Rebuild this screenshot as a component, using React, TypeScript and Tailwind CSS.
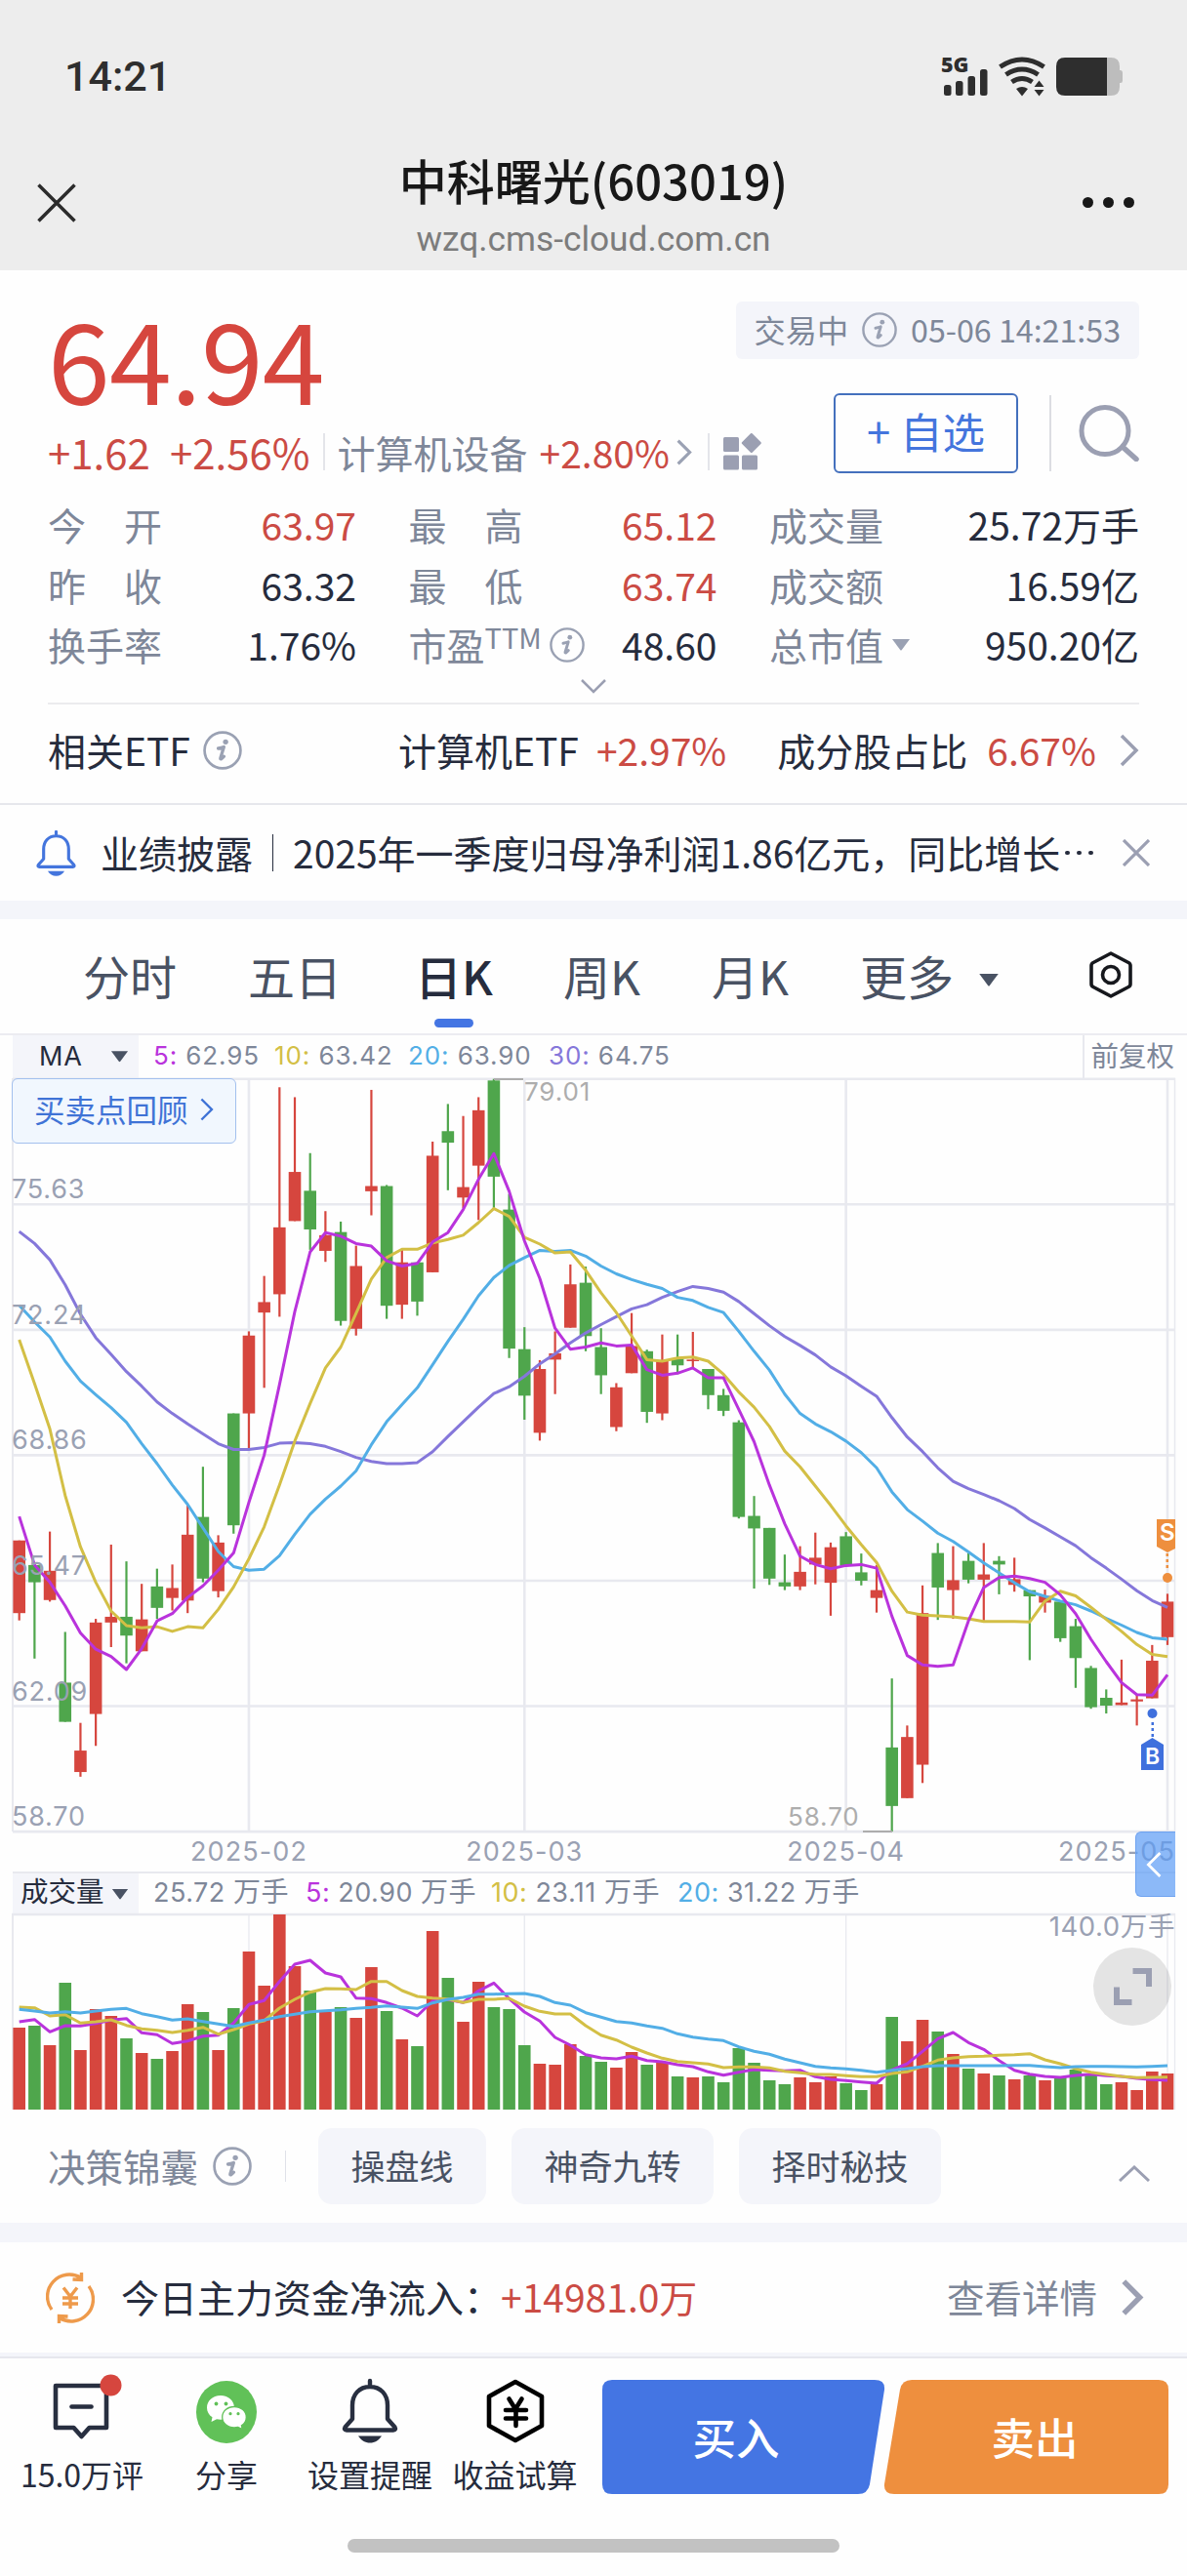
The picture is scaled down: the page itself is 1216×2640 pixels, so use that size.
import clsx from "clsx";

const UP = "#d6463e";
const DOWN = "#4fa64c";
const GRID = "#e8e9ef";

const MA_COLORS = {
  ma5: "#b933dc",
  ma10: "#d3bf45",
  ma20: "#52aee6",
  ma30: "#8577da",
};

// [rising, high, bodyTop, bodyBottom, low] in chart units below the top of the scale
const CANDLES: [number, number, number, number, number][] = [
  [1, 968, 968, 1107, 1121], [0, 1010, 1015, 1048, 1194], [1, 951, 1026, 1082, 1085],
  [0, 1143, 1240, 1315, 1315], [1, 1317, 1370, 1411, 1420], [1, 1118, 1125, 1300, 1361],
  [1, 976, 1114, 1125, 1172], [0, 1008, 1114, 1150, 1203], [1, 1051, 1119, 1180, 1180],
  [0, 1022, 1056, 1097, 1118], [1, 1014, 1059, 1078, 1102], [1, 900, 957, 1083, 1107],
  [0, 827, 923, 1041, 1048], [1, 958, 972, 1065, 1077], [0, 725, 725, 939, 955],
  [1, 568, 576, 725, 794], [1, 462, 512, 532, 676], [1, 101, 369, 497, 540],
  [1, 120, 263, 357, 357], [0, 227, 299, 373, 412], [1, 338, 384, 414, 435],
  [0, 358, 378, 548, 557], [1, 404, 443, 563, 576], [1, 106, 290, 300, 346],
  [0, 288, 290, 519, 544], [1, 412, 436, 517, 544], [0, 436, 436, 511, 538],
  [1, 205, 232, 455, 455], [0, 133, 185, 207, 298], [1, 156, 292, 312, 332],
  [1, 120, 145, 251, 355], [0, 85, 88, 272, 332], [0, 305, 335, 601, 619],
  [0, 560, 602, 691, 737], [1, 623, 640, 762, 777], [1, 568, 610, 622, 688],
  [1, 440, 478, 561, 561], [0, 444, 475, 577, 606], [0, 562, 598, 652, 688],
  [1, 667, 675, 751, 759], [1, 533, 596, 648, 648], [0, 603, 606, 722, 743],
  [1, 574, 623, 725, 738], [0, 574, 620, 633, 650], [1, 569, 622, 625, 640],
  [0, 640, 640, 690, 717], [0, 678, 690, 720, 730], [0, 738, 742, 923, 926],
  [0, 883, 921, 945, 1060], [0, 944, 944, 1041, 1053], [0, 995, 1048, 1056, 1063],
  [1, 979, 1028, 1056, 1063], [1, 953, 1001, 1014, 1052], [1, 972, 981, 1049, 1112],
  [0, 952, 960, 1016, 1016], [0, 993, 1029, 1045, 1054], [1, 1015, 1063, 1078, 1106],
  [0, 1232, 1364, 1476, 1525], [1, 1322, 1344, 1461, 1461], [1, 1054, 1107, 1397, 1432],
  [0, 973, 992, 1058, 1120], [1, 979, 1044, 1063, 1118], [0, 992, 1007, 1043, 1050],
  [1, 973, 1033, 1043, 1122], [0, 998, 1007, 1014, 1071], [1, 1001, 1042, 1053, 1066],
  [0, 1063, 1063, 1075, 1197], [1, 1062, 1074, 1087, 1106], [0, 1085, 1085, 1155, 1162],
  [0, 1118, 1132, 1193, 1250], [0, 1208, 1212, 1287, 1290], [0, 1253, 1269, 1284, 1299],
  [1, 1196, 1278, 1283, 1283], [1, 1262, 1272, 1276, 1322], [1, 1168, 1198, 1270, 1270],
  [1, 1070, 1085, 1153, 1168],
];

const PRICE_MA = {
  ma5: [922, 1015, 1048, 1093, 1145, 1176, 1190, 1215, 1175, 1122, 1108, 1077, 1055, 1025, 992, 895, 805, 670, 530, 416, 379, 386, 400, 405, 433, 443, 438, 397, 379, 335, 277, 228, 300, 395, 467, 562, 602, 598, 590, 596, 594, 641, 652, 648, 638, 657, 657, 717, 779, 862, 936, 998, 1014, 1022, 1016, 1014, 1021, 1113, 1188, 1206, 1209, 1206, 1122, 1058, 1039, 1036, 1041, 1048, 1072, 1108, 1157, 1200, 1240, 1263, 1264, 1225],
  ma10: [584, 668, 755, 882, 980, 1048, 1103, 1131, 1135, 1133, 1142, 1133, 1135, 1100, 1057, 1003, 942, 862, 778, 706, 638, 598, 534, 468, 427, 411, 411, 399, 392, 384, 360, 333, 348, 388, 401, 418, 416, 451, 494, 532, 577, 622, 625, 619, 617, 625, 650, 684, 713, 750, 797, 827, 864, 901, 940, 976, 1010, 1065, 1105, 1111, 1112, 1114, 1118, 1123, 1123, 1123, 1124, 1084, 1065, 1074, 1096, 1119, 1142, 1167, 1186, 1190],
  ma20: [518, 550, 579, 625, 663, 689, 714, 742, 783, 821, 862, 899, 944, 989, 1018, 1025, 1023, 997, 956, 918, 889, 864, 835, 785, 741, 708, 676, 632, 587, 545, 500, 465, 442, 427, 413, 415, 413, 424, 443, 458, 469, 478, 486, 503, 509, 522, 532, 568, 606, 642, 688, 725, 745, 760, 778, 800, 829, 875, 909, 931, 954, 970, 990, 1011, 1030, 1049, 1066, 1075, 1084, 1091, 1103, 1117, 1130, 1144, 1154, 1157],
  ma30: [377, 400, 431, 479, 535, 580, 612, 645, 673, 703, 725, 745, 764, 783, 794, 794, 790, 782, 781, 783, 788, 798, 809, 817, 821, 821, 819, 798, 769, 741, 713, 687, 674, 654, 630, 611, 590, 571, 555, 540, 525, 517, 503, 492, 482, 486, 493, 511, 534, 557, 578, 595, 613, 636, 653, 673, 692, 733, 770, 798, 829, 855, 869, 880, 892, 907, 928, 944, 961, 978, 1001, 1021, 1042, 1064, 1083, 1096],
};

const VOLUMES = [654, 648, 708, 516, 723, 597, 618, 687, 732, 750, 726, 582, 606, 723, 594, 420, 525, 306, 465, 540, 606, 591, 624, 468, 603, 690, 711, 357, 501, 636, 513, 591, 597, 708, 765, 768, 705, 741, 759, 777, 729, 768, 762, 804, 807, 804, 822, 717, 762, 816, 828, 807, 822, 804, 825, 846, 828, 621, 696, 630, 666, 735, 780, 795, 801, 813, 801, 816, 804, 783, 795, 828, 822, 846, 789, 795];

const VOLUME_MA = {
  ma5: [636, 629, 667, 648, 649, 641, 631, 626, 670, 676, 703, 695, 680, 677, 640, 583, 571, 512, 459, 447, 486, 498, 563, 565, 577, 594, 618, 572, 568, 577, 541, 517, 565, 606, 634, 684, 708, 737, 747, 750, 742, 755, 759, 768, 774, 790, 800, 791, 783, 785, 787, 785, 805, 813, 817, 821, 825, 784, 765, 727, 688, 669, 700, 721, 755, 785, 797, 804, 807, 801, 797, 802, 804, 810, 814, 816],
  ma10: [591, 593, 618, 614, 640, 636, 630, 647, 658, 662, 669, 662, 653, 674, 660, 643, 633, 594, 567, 545, 534, 535, 537, 512, 512, 540, 558, 563, 566, 577, 567, 567, 564, 588, 604, 612, 612, 648, 677, 692, 714, 732, 748, 758, 762, 766, 777, 775, 775, 778, 788, 793, 798, 798, 802, 805, 805, 795, 790, 773, 754, 747, 743, 742, 739, 737, 734, 753, 765, 780, 791, 798, 804, 808, 807, 806],
  ma20: [598, 603, 609, 605, 609, 603, 598, 595, 611, 620, 631, 627, 635, 643, 650, 640, 631, 620, 613, 605, 602, 599, 595, 592, 587, 591, 595, 578, 567, 561, 551, 551, 550, 549, 558, 577, 585, 608, 622, 635, 640, 649, 656, 673, 683, 689, 694, 713, 727, 736, 751, 762, 773, 778, 781, 785, 791, 785, 780, 774, 771, 771, 771, 771, 771, 770, 770, 774, 777, 774, 773, 773, 774, 775, 773, 771],
};

const MONTHS = [
  { label: "2025-02", index: 15 },
  { label: "2025-03", index: 33 },
  { label: "2025-04", index: 54 },
  { label: "2025-05", index: 75 },
];

const PRICE_TICKS = ["75.63", "72.24", "68.86", "65.47", "62.09", "58.70"];

const candleX = (i: number) => 19.7 + i * 15.684;
const priceY = (v: number) => (v - 85) / 1.8667 + 0.7;
const volumeY = (v: number) => (v - 303) / 3;

const toPoints = (values: number[], scale: (v: number) => number) =>
  values.map((v, i) => `${candleX(i).toFixed(1)},${scale(v).toFixed(1)}`).join(" ");

function InfoIcon({ className }: { className?: string }) {
  return (
    <svg viewBox="0 0 36 36" className={clsx("shrink-0", className)} fill="none">
      <circle cx="18" cy="18" r="16.6" stroke="#9aa1b3" strokeWidth="2.4" />
      <circle cx="20.8" cy="10.2" r="2.4" fill="#9aa1b3" />
      <path
        d="M14 16.2c2.2-.3 3.800-.8 5.200-1.300l-3.100 10.200c-.5 1.800 1.300.6 3.200-1.500"
        stroke="#9aa1b3"
        strokeWidth="3"
        strokeLinecap="round"
        strokeLinejoin="round"
      />
    </svg>
  );
}

function Chevron({ className, width = 4 }: { className?: string; width?: number }) {
  return (
    <svg viewBox="0 0 20 34" className={clsx("shrink-0", className)} fill="none">
      <path d="M2 2l15 15L2 32" stroke="currentColor" strokeWidth={width} />
    </svg>
  );
}

function Caret({ className }: { className?: string }) {
  return (
    <svg viewBox="0 0 20 12" className={clsx("shrink-0", className)} fill="currentColor">
      <path d="M1 0h18L10.800 11q-.8 1-1.600 0z" />
    </svg>
  );
}

function BellIcon({ className }: { className?: string }) {
  return (
    <svg viewBox="0 0 60 66" className={clsx("shrink-0", className)} fill="none">
      <path
        d="M30 2v6M12 41V27c0-11 7-19 18-19s18 8 18 19v14l7.500 8.500c1 1.800.5 3-1.500 3H6c-2 0-2.500-1.200-1.500-3z"
        stroke="currentColor"
        strokeWidth="4.400"
        strokeLinecap="round"
        strokeLinejoin="round"
      />
      <path d="M18 58.500h24c-3 4.500-7 7-12 7s-9-2.500-12-7z" fill="currentColor" />
    </svg>
  );
}

function StatusBar() {
  return (
    <div className="flex h-[156px] items-center justify-between pl-[66px] pr-[64px]">
      <span className="font-[Roboto] text-[43px] font-medium leading-none text-[#2e2e2e]">14:21</span>
      <svg width="188" height="42" viewBox="0 0 188 42" className="block overflow-visible" fill="#2e2e2e">
        <text x="0" y="16.500" fontSize="21.500" fontWeight="800" fontFamily="'Open Sans', sans-serif">
          5G
        </text>
        <rect x="3" y="30" width="7.500" height="11" rx="2.500" />
        <rect x="15" y="26" width="7.500" height="15" rx="2.500" />
        <rect x="27.500" y="21" width="7.500" height="20" rx="2.500" />
        <rect x="40" y="14" width="7.500" height="27" rx="2.500" />
        <g fill="none" stroke="#2e2e2e" strokeWidth="5">
          <path d="M60.500 11.500q22.500-15 45 0" />
          <path d="M66.500 19.500q16.500-11 33 0" />
          <path d="M72.500 27q10.500-7 21 0" />
        </g>
        <path d="M77 34q6-4 12 0l-6 7.500zM95.500 32l5-6.500 5 6.500zM95.500 35l5 6.500 5-6.500z" />
        <path d="M169 2h5q9 0 9 9v4h1q2 0 2 2.500v8q0 2.500-2 2.500h-1v4q0 9-9 9h-5z" fill="#bdbdbd" />
        <path d="M170 2v39h-43q-9 0-9-9V11q0-9 9-9z" />
      </svg>
    </div>
  );
}

function TitleBar() {
  return (
    <div className="relative flex h-[121px] flex-col items-center">
      <svg viewBox="0 0 40 40" className="absolute left-[38px] top-8 size-10">
        <path d="M1.500 1.500l37 37M38.500 1.500l-37 37" stroke="#2b2b2b" strokeWidth="3.500" />
      </svg>
      <h1 className="mt-0.5 text-[49px] font-medium leading-[52px] text-[#181818]">中科曙光(603019)</h1>
      <p className="mt-[15px] font-[Roboto] text-[35.300px] leading-[40px] text-[#7c7c7c]">wzq.cms-cloud.com.cn</p>
      <div className="absolute right-[54px] top-[46px] flex gap-2.5">
        <i className="size-[11px] rounded-full bg-[#181818]" />
        <i className="size-[11px] rounded-full bg-[#181818]" />
        <i className="size-[11px] rounded-full bg-[#181818]" />
      </div>
    </div>
  );
}

function QuoteHeader() {
  return (
    <div className="flex h-[227px] justify-between whitespace-nowrap">
      <div className="w-[690px] pt-[27px] text-[#cb4b44]">
        <div className="h-[126px] text-[115px] leading-[122px] tracking-[-0.9px] text-[#d6463e]">64.94</div>
        <div className="flex h-[66px] items-center">
          <span className="text-[42px]">+1.62</span>
          <span className="ml-5 text-[42px]">+2.56%</span>
          <i className="ml-[13px] h-[38px] w-0.5 shrink-0 bg-[#e4e5ea]" />
          <span className="ml-[13px] text-[39px] text-[#7e8799]">计算机设备</span>
          <span className="ml-3 text-[39px]">+2.80%</span>
          <Chevron className="ml-[7px] h-[27px] w-4 text-[#9aa1b3]" />
          <i className="ml-4 h-[38px] w-0.5 shrink-0 bg-[#e4e5ea]" />
          <svg viewBox="0 0 40 38" className="ml-3.5 h-[38px] w-10 shrink-0" fill="#9b9fb2">
            <rect x="0" y="4" width="16" height="15" rx="1.500" />
            <rect x="0" y="22.500" width="16" height="15" rx="1.500" />
            <rect x="19" y="22.500" width="16" height="15" rx="1.500" />
            <rect x="21.300" y="2.500" width="15" height="15" rx="1.500" transform="rotate(45 28.800 10)" />
          </svg>
        </div>
      </div>
      <div className="flex shrink-0 flex-col items-end pt-8">
        <div className="flex h-[59px] items-center rounded-md bg-[#f4f5fa] px-[19px] pb-0.5 text-[32.200px] text-[#7e8799]">
          交易中
          <InfoIcon className="mx-[14px] size-9" />
          <span>05-06 14:21:53</span>
        </div>
        <div className="mt-[35px] flex items-center">
          <button className="flex h-[82px] w-[189px] items-center justify-center rounded-md border-[2.500px] border-[#4470bd] pb-1 text-[43.500px] leading-none text-[#4475dd]">
            + 自选
          </button>
          <i className="ml-8 h-[78px] w-0.5 bg-[#dcdde2]" />
          <svg viewBox="0 0 62 58" className="ml-7 h-[58px] w-[62px]" fill="none" stroke="#9b9fb2">
            <circle cx="27" cy="26.500" r="24" strokeWidth="5" />
            <path d="M45 43l14 12.500" strokeWidth="5.500" strokeLinecap="round" />
          </svg>
        </div>
      </div>
    </div>
  );
}

function Stat({ label, value, tone = "text-[#262c3d]" }: { label: React.ReactNode; value: string; tone?: string }) {
  return (
    <div className="flex items-center justify-between whitespace-nowrap">
      <div className="flex items-center text-[#7e8799]">{label}</div>
      <span className={tone}>{value}</span>
    </div>
  );
}

function SpreadLabel({ text }: { text: string }) {
  return (
    <span className="flex w-[117px] justify-between">
      {text.split("").map((c) => (
        <span key={c}>{c}</span>
      ))}
    </span>
  );
}

function QuoteStats() {
  const red = "text-[#cb4b44]";
  return (
    <div className="grid auto-rows-[61.500px] grid-cols-[316px_316px_379px] justify-between text-[39px]">
      <Stat label={<SpreadLabel text="今开" />} value="63.97" tone={red} />
      <Stat label={<SpreadLabel text="最高" />} value="65.12" tone={red} />
      <Stat label="成交量" value="25.72万手" />
      <Stat label={<SpreadLabel text="昨收" />} value="63.32" />
      <Stat label={<SpreadLabel text="最低" />} value="63.74" tone={red} />
      <Stat label="成交额" value="16.59亿" />
      <Stat label="换手率" value="1.76%" />
      <Stat
        label={
          <>
            市盈
            <span className="mb-4 text-[29px] leading-none">TTM</span>
            <InfoIcon className="ml-2 size-9" />
          </>
        }
        value="48.60"
      />
      <Stat
        label={
          <>
            总市值
            <Caret className="ml-2 h-3.5 w-5 text-[#9aa1b3]" />
          </>
        }
        value="950.20亿"
      />
    </div>
  );
}

function RelatedEtf() {
  return (
    <div className="flex h-[103px] items-center whitespace-nowrap border-t-2 border-[#ebebee] pb-2 text-[39px] text-[#262c3d]">
      <span className="w-[145px]">相关ETF</span>
      <InfoIcon className="ml-3.5 size-10" />
      <span className="ml-40">计算机ETF</span>
      <span className="ml-[18px] text-[#cb4b44]">+2.97%</span>
      <span className="ml-[52px]">成分股占比</span>
      <span className="ml-5 text-[#cb4b44]">6.67%</span>
      <Chevron className="ml-auto h-[34px] w-5 text-[#9b9fb2]" width={3.5} />
    </div>
  );
}

function Notice() {
  return (
    <div className="flex h-[100px] items-center whitespace-nowrap border-t-2 border-[#e6e7ec] pl-9 pr-[38px] text-[39px] text-[#262c3d]">
      <BellIcon className="h-[47px] w-[43px] text-[#4475dd]" />
      <span className="ml-[24px] pb-0.5">业绩披露</span>
      <i className="mx-5 h-[38px] w-px bg-[#262c3d]" />
      <span className="pb-0.5">2025年一季度归母净利润1.86亿元，同比增长</span>
      <span className="ml-[5px] flex gap-[7.500px]">
        <i className="size-[4.500px] rounded-full bg-[#262c3d]" />
        <i className="size-[4.500px] rounded-full bg-[#262c3d]" />
        <i className="size-[4.500px] rounded-full bg-[#262c3d]" />
      </span>
      <svg viewBox="0 0 28 28" className="ml-auto size-7">
        <path d="M1 1l26 26M27 1L1 27" stroke="#9b9fb2" strokeWidth="3.200" />
      </svg>
    </div>
  );
}

function PeriodTabs() {
  const tabs = [
    { name: "分时", gap: "" },
    { name: "五日", gap: "ml-[73px]" },
    { name: "日K", gap: "ml-[75px]", active: true },
    { name: "周K", gap: "ml-[72px]" },
    { name: "月K", gap: "ml-[73px]" },
    { name: "更多", gap: "ml-[73px]" },
  ];
  return (
    <div className="flex h-[117px] items-center whitespace-nowrap pl-[85px] pr-[56px] text-[48px] text-[#495263]">
      {tabs.map((t) => (
        <span key={t.name} className={clsx("relative pb-1", t.gap, t.active && "font-medium text-[#262c3d]")}>
          {t.name}
          {t.active && (
            <i className="absolute -bottom-[26px] left-1/2 h-[9px] w-10 -translate-x-1/2 rounded-full bg-[#4475e3]" />
          )}
        </span>
      ))}
      <Caret className="ml-[25px] mt-2 h-[13px] w-[22px]" />
      <svg viewBox="0 0 44 48" className="mb-1 ml-auto h-12 w-11" fill="none" stroke="#16181d" strokeWidth="3.600">
        <path d="M22 2l18 9.500q2 1 2 3v19q0 2-2 3L22 46 4 36.500q-2-1-2-3v-19q0-2 2-3z" strokeLinejoin="round" />
        <circle cx="22" cy="24" r="8.500" />
      </svg>
    </div>
  );
}

function MaLegend() {
  return (
    <div className="flex h-[46px] items-stretch border-t-2 border-[#ececf1] pl-[13px] pr-[13px] font-[Inter] text-[26px] leading-[42px] tracking-[0.9px] text-[#7e8799]">
      <span className="flex w-[129px] items-center justify-between bg-[#f4f5fa] pl-[27px] pr-2.5 text-[27px] text-[#262c3d]">
        MA
        <Caret className="h-3 w-[19px] text-[#495263]" />
      </span>
      <span className="ml-[15px] w-[124px]"><b className="font-normal text-[#b933dc]">5:</b> 62.95</span>
      <span className="w-[137px]"><b className="font-normal text-[#d3bf45]">10:</b> 63.42</span>
      <span className="w-[144px]"><b className="font-normal text-[#52aee6]">20:</b> 63.90</span>
      <span><b className="font-normal text-[#8577da]">30:</b> 64.75</span>
      <span className="ml-auto border-l-2 border-[#e8e9ef] pl-1.5 font-['Noto_Sans_CJK_SC'] text-[28.500px] leading-[40px] tracking-normal">前复权</span>
    </div>
  );
}

function PriceChart() {
  return (
    <div className="relative h-[815px]">
      <svg width="1216" height="815" viewBox="0 0 1216 815" className="block overflow-visible font-[Inter]">
        <g stroke={GRID} strokeWidth="2.600">
          {[0, 1, 2, 3, 4, 5, 6].map((n) => (
            <line key={n} x1="13" x2="1204" y1={priceY(85 + n * 240)} y2={priceY(85 + n * 240)} />
          ))}
          <line x1="13" x2="13" y1="0" y2="772" strokeWidth="2" />
          <line x1="1203.500" x2="1203.500" y1="0" y2="772" strokeWidth="1.500" />
          {MONTHS.map((m) => (
            <line key={m.label} x1={candleX(m.index)} x2={candleX(m.index)} y1="0" y2="772" />
          ))}
          <line x1="13" x2="1204" y1="814" y2="814" strokeWidth="2" />
        </g>

        {CANDLES.map(([rising, high, top, bottom, low], i) => (
          <g key={i} fill={rising ? UP : DOWN}>
            <rect x={candleX(i) - 1.1} y={priceY(high)} width="2.200" height={priceY(low) - priceY(high)} />
            <rect x={candleX(i) - 6.3} y={priceY(top)} width="12.600" height={priceY(bottom) - priceY(top)} />
          </g>
        ))}

        <g fill="none" strokeWidth="3" strokeLinejoin="round">
          <polyline points={toPoints(PRICE_MA.ma30, priceY)} stroke={MA_COLORS.ma30} />
          <polyline points={toPoints(PRICE_MA.ma20, priceY)} stroke={MA_COLORS.ma20} />
          <polyline points={toPoints(PRICE_MA.ma10, priceY)} stroke={MA_COLORS.ma10} />
          <polyline points={toPoints(PRICE_MA.ma5, priceY)} stroke={MA_COLORS.ma5} />
        </g>

        <g fill="#9aa1b3" fontSize="27" letterSpacing="0.8">
          {PRICE_TICKS.map((p, n) => (
            <text key={p} x="12" y={priceY(85 + (n + 1) * 240) - 6}>
              {p}
            </text>
          ))}
        </g>
        <g fill="#9aa1b3" fontSize="27" letterSpacing="1.100">
          {MONTHS.map((m) =>
            m.index === 75 ? (
              <text key={m.label} x="1204" y="802" textAnchor="end">
                {m.label}
              </text>
            ) : (
              <text key={m.label} x={candleX(m.index)} y="802" textAnchor="middle">
                {m.label}
              </text>
            ),
          )}
        </g>

        {/* highest and lowest price in view */}
        <g fill="#adadad" fontSize="26" letterSpacing="0.9">
          <path d="M506 0h30v2h-30zM884 771h30v2h-30z" />
          <text x="537" y="23">79.01</text>
          <text x="807" y="766">58.70</text>
        </g>

        {/* sell marker */}
        <g fill="#ee8f3e">
          <path d="M1185 452h19v30l-8 4-11-6z" />
          <rect x="1194.500" y="487" width="2.500" height="3" />
          <rect x="1194.500" y="493" width="2.500" height="3" />
          <rect x="1194.500" y="499" width="2.500" height="3" />
          <circle cx="1196" cy="512" r="5" />
          <text x="1188" y="474" fontSize="24" fontWeight="600" fill="#fff">S</text>
        </g>
        {/* buy marker */}
        <g fill="#3f70dd">
          <circle cx="1180.500" cy="651" r="5" />
          <rect x="1179.500" y="660" width="2.500" height="3" />
          <rect x="1179.500" y="666" width="2.500" height="3" />
          <rect x="1179.500" y="672" width="2.500" height="3" />
          <path d="M1169 683l11.500-7 11.500 7v26h-23z" />
          <text x="1180.500" y="703" fontSize="23" fontWeight="600" textAnchor="middle" fill="#fff">B</text>
        </g>
      </svg>

      <button className="absolute left-3 top-0 flex h-[67px] w-[230px] items-center rounded-md border-[1.500px] border-[#a3c0ee] bg-[#f1f7fe] pb-[3px] pl-[22px] text-[31.500px] text-[#3f73d6]">
        买卖点回顾
        <Chevron className="ml-3 h-6 w-3.5" width={3.5} />
      </button>
      <div className="absolute right-3 top-[772px] z-10 flex h-[67px] w-[41px] items-center justify-center rounded-l-md border border-r-0 border-[#6fa3f0] bg-[#5b9bf5]/70 pr-1 text-white">
        <Chevron className="h-7 w-4 rotate-180" width={3.5} />
      </div>
    </div>
  );
}

function VolumeChart() {
  return (
    <>
      <div className="flex h-[41px] items-center whitespace-nowrap pl-[13px] font-[Inter,'Noto_Sans_CJK_SC'] text-[27px] leading-none tracking-[0.5px] text-[#7e8799]">
        <span className="flex h-full w-[129px] items-center bg-[#f4f5fa] pb-[3px] pl-2 text-[28.500px] tracking-normal text-[#262c3d]">
          成交量
          <Caret className="ml-[7px] mt-1 h-[13px] w-[18px] text-[#495263]" />
        </span>
        <span className="ml-[15px] w-[156px] pb-[3px]">25.72 <span className="text-[28px]">万手</span></span>
        <span className="w-[190px] pb-[3px]"><b className="font-normal text-[#b933dc]">5:</b> 20.90 <span className="text-[28px]">万手</span></span>
        <span className="w-[191px] pb-[3px]"><b className="font-normal text-[#d3bf45]">10:</b> 23.11 <span className="text-[28px]">万手</span></span>
        <span className="pb-[3px]"><b className="font-normal text-[#52aee6]">20:</b> 31.22 <span className="text-[28px]">万手</span></span>
      </div>
      <div className="relative h-[201px]">
        <svg width="1216" height="201" viewBox="0 0 1216 201" className="block overflow-visible font-[Inter,'Noto_Sans_CJK_SC']">
          <g stroke={GRID} strokeWidth="1.300">
            <line x1="12" x2="1204" y1="1" y2="1" strokeWidth="2.600" />
            <line x1="13" x2="13" y1="0" y2="201" strokeWidth="2" />
            <line x1="1203.500" x2="1203.500" y1="0" y2="201" />
            {MONTHS.map((m) => (
              <line key={m.label} x1={candleX(m.index)} x2={candleX(m.index)} y1="0" y2="201" />
            ))}
          </g>
          {VOLUMES.map((v, i) => (
            <rect
              key={i}
              x={candleX(i) - 6.3}
              y={volumeY(v)}
              width="12.600"
              height={201 - volumeY(v)}
              fill={CANDLES[i][0] ? UP : DOWN}
            />
          ))}
          <g fill="none" strokeWidth="3" strokeLinejoin="round">
            <polyline points={toPoints(VOLUME_MA.ma5, volumeY)} stroke={MA_COLORS.ma5} />
            <polyline points={toPoints(VOLUME_MA.ma10, volumeY)} stroke={MA_COLORS.ma10} />
            <polyline points={toPoints(VOLUME_MA.ma20, volumeY)} stroke={MA_COLORS.ma20} />
          </g>
          <text x="1204" y="23" fontSize="27.500" letterSpacing="0.6" textAnchor="end" fill="#9aa1b3">140.0万手</text>
        </svg>
        <div className="absolute right-4 top-[35px] flex size-20 items-center justify-center rounded-full bg-black/10">
          <svg viewBox="0 0 40 40" className="size-10" fill="none" stroke="#9b9fb2" strokeWidth="6">
            <path d="M20.500 4H37v16M19.500 36H4V20.500" />
          </svg>
        </div>
      </div>
    </>
  );
}

function StrategyBar() {
  return (
    <div className="flex h-[116px] items-center whitespace-nowrap pl-[49px] pr-[38px]">
      <span className="pb-0.5 text-[38.500px] text-[#7e8799]">决策锦囊</span>
      <InfoIcon className="ml-[15px] size-10" />
      <i className="ml-[34px] h-8 w-px bg-[#dfe1e8]" />
      <div className="ml-[33px] flex gap-[26px] text-[35px] text-[#495263]">
        {["操盘线", "神奇九转", "择时秘技"].map((name) => (
          <span key={name} className="flex h-[78px] items-center rounded-[14px] bg-[#f4f5fa] px-[33.500px] pb-[3px]">
            {name}
          </span>
        ))}
      </div>
      <svg viewBox="0 0 32 17" className="ml-auto mt-3.5 h-[17px] w-8" fill="none">
        <path d="M1 16L16 2l15 14" stroke="#9b9fb2" strokeWidth="3" />
      </svg>
    </div>
  );
}

function CapitalFlow() {
  return (
    <div className="flex h-[113px] items-center whitespace-nowrap pl-[47px] pr-[42px] text-[39px] text-[#262c3d]">
      <svg viewBox="0 0 50 52" className="h-[52px] w-[50px]" fill="none" stroke="#ee9a4b" strokeWidth="3.400">
        <path d="M36 5.500A22.500 22.500 0 0 0 6 38M36.500 0v7.500l-9-.5" />
        <path d="M14 46.500A22.500 22.500 0 0 0 44 14M13.500 52v-7.500l9 .5" />
        <path d="M18 15.500l7 9 7-9M17 26h16M17 32h16M25 25v12" />
      </svg>
      <span className="ml-[27px] pb-0.5">今日主力资金净流入：</span>
      <span className="-ml-px pb-0.5 text-[#cb4b44]">+14981.0万</span>
      <span className="ml-auto pb-0.5 text-[38.500px] text-[#7e8799]">查看详情</span>
      <Chevron className="ml-[22px] h-[37px] w-7 text-[#9b9fb2]" width={5} />
    </div>
  );
}

function WechatIcon() {
  return (
    <svg viewBox="0 0 62 64" className="h-16 w-[62px]">
      <ellipse cx="31" cy="32" rx="31" ry="32" fill="#61c158" />
      <path
        d="M25 15c-8.300 0-14 5.600-14 12.500 0 4.200 2 7.500 5.500 9.800L15.500 42l5.500-2.800c1.300.3 2.700.5 4 .5 8.300 0 14-5.400 14-12.200S33.300 15 25 15z"
        fill="#fff"
      />
      <path
        d="M39 26.500c-7 0-12.300 4.700-12.300 10.700S32 48 39 48c1.300 0 2.600-.2 3.800-.5l4.500 2.200-.9-3.800c3-2 4.900-5 4.900-8.700 0-6-5.300-10.700-12.300-10.700z"
        fill="#fff"
        stroke="#61c158"
        strokeWidth="1.300"
      />
      <g fill="#61c158">
        <circle cx="20.500" cy="23.500" r="1.900" />
        <circle cx="30.500" cy="23.500" r="1.900" />
        <circle cx="35" cy="33.700" r="1.600" />
        <circle cx="43" cy="33.700" r="1.600" />
      </g>
    </svg>
  );
}

function BottomBar() {
  const items = [
    {
      label: "15.0万评",
      width: "w-[132px]",
      icon: (
        <svg viewBox="0 0 72 66" className="h-[66px] w-[72px]" fill="none">
          <path
            d="M7 7h52v43H41.500L33.500 59l-8-9H7z"
            transform="translate(2 0)"
            stroke="#282f40"
            strokeWidth="4.600"
            strokeLinejoin="round"
          />
          <path d="M25.500 28.500h20" stroke="#282f40" strokeWidth="4.600" strokeLinecap="round" />
          <circle cx="65.500" cy="6.500" r="11" fill="#d6463e" />
        </svg>
      ),
    },
    { label: "分享", width: "w-[164px]", icon: <WechatIcon /> },
    { label: "设置提醒", width: "w-[130px]", icon: <BellIcon className="h-[66px] w-[60px] text-[#282f40]" /> },
    {
      label: "收益试算",
      width: "w-[167px]",
      icon: (
        <svg viewBox="0 0 60 66" className="h-[66px] w-[60px]" fill="none" stroke="#000" strokeWidth="4.600">
          <path d="M30 3l27 15v30L30 63 3 48V18z" strokeLinejoin="round" />
          <path d="M23.500 20.500L30 31l6.500-10.500M20 32h21M20 40.500h21M30.500 32v16" strokeWidth="4.600" strokeLinecap="round" />
        </svg>
      ),
    },
  ];
  return (
    <div className="flex h-[158px] whitespace-nowrap pl-[18px] pr-[19px]">
      <div className="flex w-[600px] text-[32px] text-[#262c3d]">
        {items.map((it) => (
          <div key={it.label} className={clsx("flex flex-col items-center pt-[21px]", it.width)}>
            <div className="flex h-[66px] items-end [&>svg]:overflow-visible">{it.icon}</div>
            <span className="mt-2 leading-[46px]">{it.label}</span>
          </div>
        ))}
      </div>
      <div className="relative mt-[22px] h-[117px] w-[580px]">
        <svg viewBox="0 0 580 117" className="absolute inset-0 h-[117px] w-[580px]">
          <path d="M10 0h269q11 0 10 10l-15 97q-2 10-12 10H10q-10 0-10-10V10Q0 0 10 0z" fill="#4475e3" />
          <path d="M317 0h253q10 0 10 10v97q0 10-10 10H299q-11 0-10-10l16-97q2-10 12-10z" fill="#ee8f3e" />
        </svg>
        <div className="relative flex h-full items-center text-[44.500px] font-medium text-white">
          <span className="w-[274px] text-center">买入</span>
          <span className="ml-[32px] w-[274px] text-center">卖出</span>
        </div>
      </div>
    </div>
  );
}

export default function App() {
  return (
    <main className="h-[2640px] w-[1216px] overflow-hidden bg-[#fefefe] font-['Noto_Sans_CJK_SC',sans-serif] leading-none">
      <header className="bg-[#ededed]">
        <StatusBar />
        <TitleBar />
      </header>

      <section className="px-[49px]">
        <QuoteHeader />
        <div className="h-[186px] pt-[3px]">
          <QuoteStats />
        </div>
        <div className="flex h-[30px] justify-center pt-1.5">
          <svg viewBox="0 0 26 15" className="h-[15px] w-[26px]" fill="none">
            <path d="M1 1l12 12L25 1" stroke="#9b9fb2" strokeWidth="2.500" />
          </svg>
        </div>
        <RelatedEtf />
      </section>

      <Notice />
      <div className="h-[19px] bg-[#f4f5fa]" />

      <section>
        <PeriodTabs />
        <MaLegend />
        <PriceChart />
        <VolumeChart />
        <StrategyBar />
      </section>

      <div className="h-5 bg-[#f4f5fa]" />
      <CapitalFlow />
      <div className="h-1.5 border-b-2 border-[#e6e7ee] bg-[#f4f5fa]" />

      <BottomBar />
      <div className="flex justify-center pt-[27px]">
        <i className="h-3.5 w-[504px] rounded-full bg-[#c2c2c2]" />
      </div>
    </main>
  );
}
